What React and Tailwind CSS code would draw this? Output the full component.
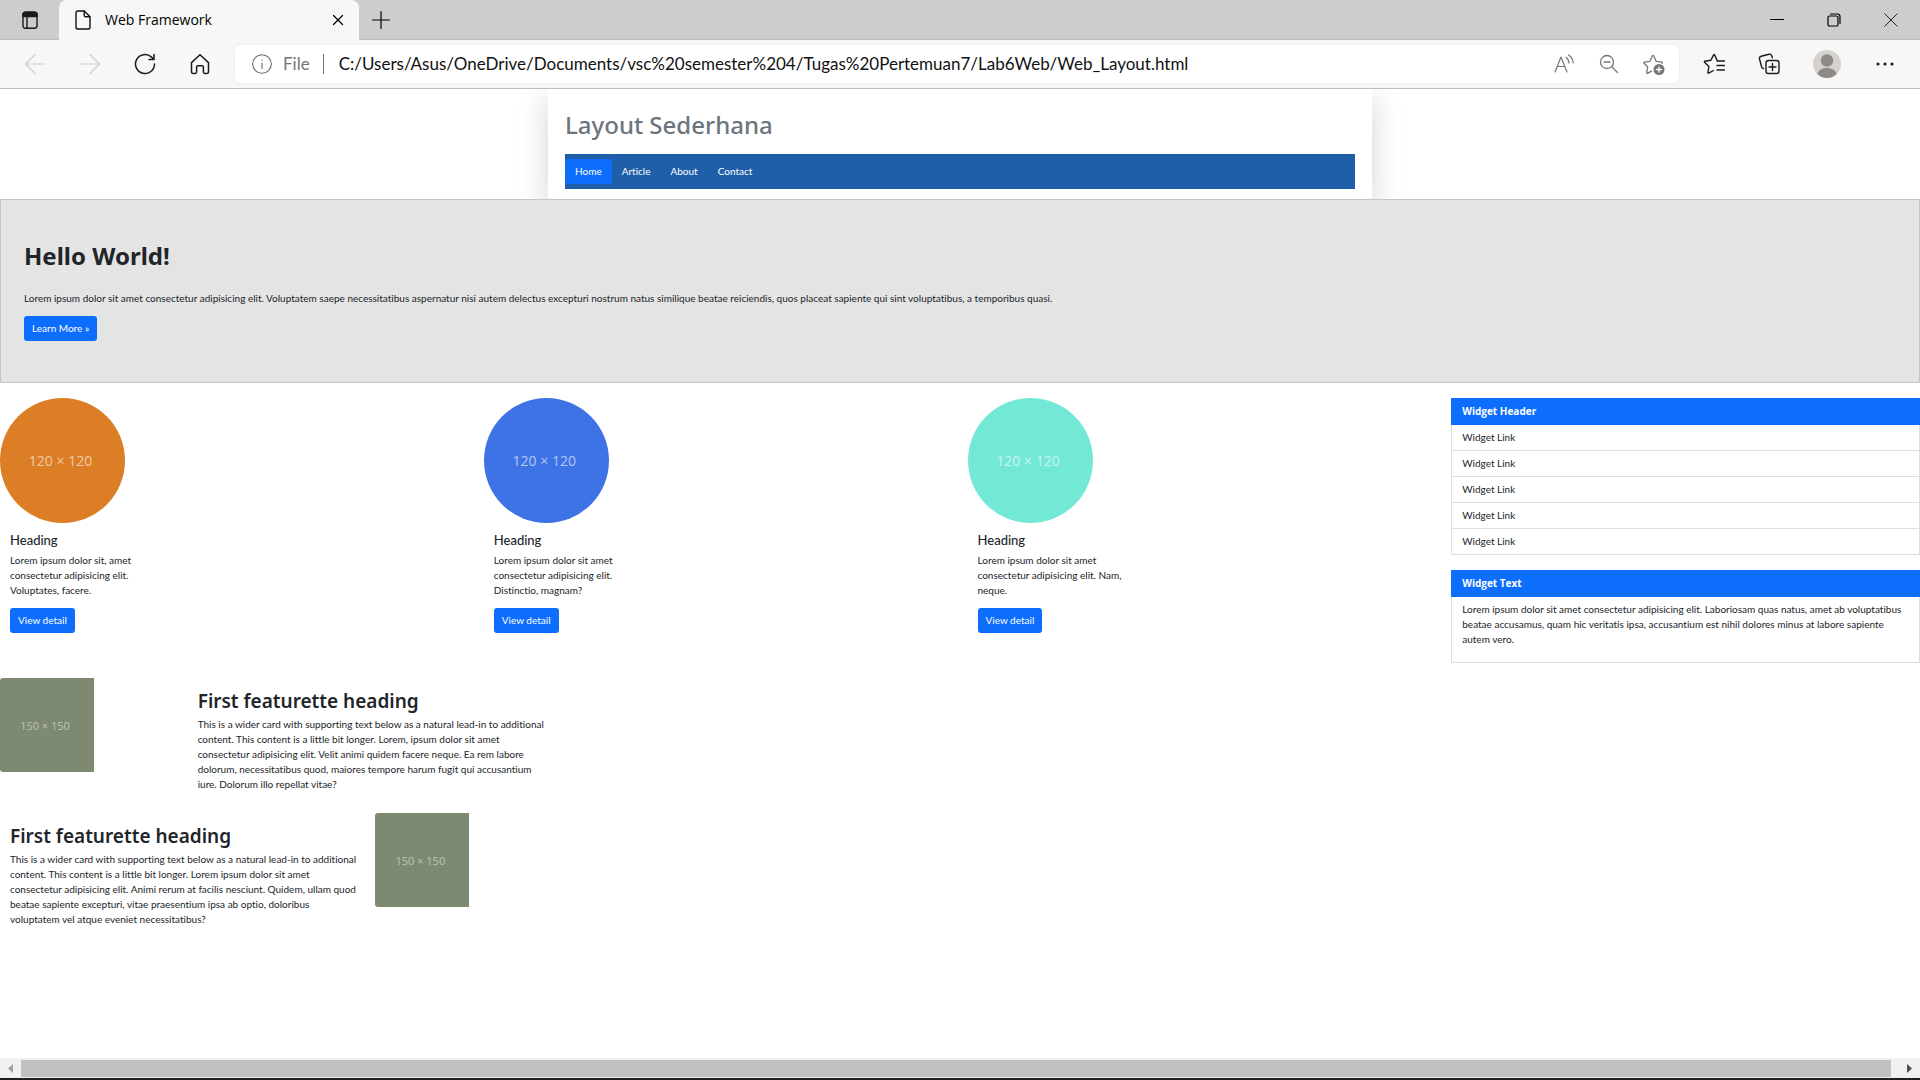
import React from "react";

function Icon({ size = 20, children, className = "", sw = 1.2 }) {
  return (
    <svg
      width={size}
      height={size}
      viewBox={`0 0 ${size} ${size}`}
      fill="none"
      stroke="currentColor"
      strokeWidth={sw}
      strokeLinecap="round"
      strokeLinejoin="round"
      className={`shrink-0 ${className}`}
      aria-hidden="true"
    >
      {children}
    </svg>
  );
}

function TabBar() {
  return (
    <div className="flex h-10 items-stretch bg-[#cdcdcd] shadow-[inset_0_-1px_0_#bcbcbc]">
      <button aria-label="Tab actions" className="flex w-[59px] items-center justify-center text-[#1a1a1a]">
        <Icon sw={1.4}>
          <rect x="3" y="2.2" width="14" height="16" rx="2.4" />
          <path d="M3 4.6C3 3.2 3.8 2.2 5.4 2.2h9.2c1.6 0 2.4 1 2.4 2.4v2H3z" fill="currentColor" />
          <path d="M7 7v11" />
        </Icon>
      </button>
      <div className="flex w-[300px] items-center rounded-t-lg bg-[#f7f7f7] pr-[11px] pl-[14px]">
        <Icon size={20} sw={1.4} className="text-[#111]">
          <path d="M4.8 1h6.4L17 6.8v10.4c0 1-.8 1.8-1.8 1.8H4.8C3.8 19 3 18.2 3 17.2V2.8C3 1.8 3.8 1 4.8 1z" />
          <path d="M11.2 1v4.2c0 1 .6 1.6 1.6 1.6H17" />
        </Icon>
        <span className="ml-3 flex-1 font-['Open_Sans',sans-serif] text-[14px] leading-5 text-black">Web Framework</span>
        <button aria-label="Close tab" className="flex size-5 items-center justify-center text-black">
          <Icon size={12} sw={1.3}>
            <path d="M1.5 1.5l9 9M10.5 1.5l-9 9" />
          </Icon>
        </button>
      </div>
      <button aria-label="New tab" className="flex w-11 items-center justify-center text-black">
        <Icon size={20}>
          <path d="M10 1.5v17M1.5 10h17" />
        </Icon>
      </button>
      <div className="flex-1" />
      <button aria-label="Minimize" className="flex w-[57px] items-center justify-center text-black">
        <Icon size={14} sw={1}>
          <path d="M.5 6.5h13" />
        </Icon>
      </button>
      <button aria-label="Restore" className="flex w-[57px] items-center justify-center text-black">
        <Icon size={14} sw={1.2}>
          <rect x="1" y="3" width="10" height="10" rx="1.6" />
          <path d="M3.5 1h6.8c1.6 0 2.7 1.1 2.7 2.7v6.8" />
        </Icon>
      </button>
      <button aria-label="Close window" className="flex w-[58px] items-center justify-center text-[#222]">
        <Icon size={14} sw={1}>
          <path d="M.8.8l12.4 12.4M13.2.8L.8 13.2" />
        </Icon>
      </button>
    </div>
  );
}

function ToolButton({ label, className = "w-[55px]", children }) {
  return (
    <button aria-label={label} className={`flex h-10 items-center justify-center text-[#1b1b1b] ${className}`}>
      {children}
    </button>
  );
}

function Toolbar() {
  return (
    <div className="flex h-[49px] items-center border-b border-[#bdbdbd] bg-[#f7f7f7] pl-[7px]">
      <ToolButton label="Back">
        <Icon size={22} className="text-[#cfcfcf]">
          <path d="M21 11H1.5M11 1.5L1.5 11l9.5 9.5" />
        </Icon>
      </ToolButton>
      <ToolButton label="Forward">
        <Icon size={22} className="text-[#cfcfcf]">
          <path d="M1 11h19.5M11 1.5l9.5 9.5-9.5 9.5" />
        </Icon>
      </ToolButton>
      <ToolButton label="Refresh">
        <Icon size={22} sw={1.5}>
          <path d="M20.5 11a9.5 9.5 0 1 1-3.2-7.1L19.5 6" />
          <path d="M20 1.5v5h-5" />
        </Icon>
      </ToolButton>
      <ToolButton label="Home">
        <Icon size={22} sw={1.5}>
          <path d="M2.5 9.6L11 1.8l8.5 7.8v9.4c0 .9-.5 1.4-1.4 1.4h-2.3c-.9 0-1.4-.5-1.4-1.4v-4.7c0-1-.6-1.6-1.6-1.6H9.2c-1 0-1.600.6-1.600 1.600V19c0 .9-.5 1.400-1.400 1.400H3.900c-.9 0-1.400-.5-1.400-1.400z" />
        </Icon>
      </ToolButton>
      <div className="ml-2 flex h-[38px] flex-1 items-center rounded-md bg-white pr-[3px] pl-[17px] shadow-[0_0_4px_rgba(0,0,0,0.06)]">
        <Icon size={20} sw={1.1} className="text-[#6b6b6b]">
          <circle cx="10" cy="10" r="9.3" />
          <path d="M10 9v5.5M10 5.8v.4" />
        </Icon>
        <span className="ml-[11px] text-[17px] text-[#767676]">File</span>
        <span className="mr-[15px] ml-[13px] h-5 w-px bg-[#767676]" />
        <input
          aria-label="Address"
          className="min-w-0 flex-1 bg-transparent text-[17px] text-[#111] outline-none"
          defaultValue="C:/Users/Asus/OneDrive/Documents/vsc%20semester%204/Tugas%20Pertemuan7/Lab6Web/Web_Layout.html"
        />
        <div className="flex items-center text-[#767676]">
          <button aria-label="Read aloud" className="flex w-[45px] justify-center">
            <Icon size={20}>
              <path d="M1 18L7 3l6 15M3.3 12.5h7.4" />
              <path d="M12 3.5c1.8 1.2 2.8 3 2.9 5.5M14.5 1c2.8 1.7 4.5 4.4 4.7 8" />
            </Icon>
          </button>
          <button aria-label="Zoom out" className="flex w-[45px] justify-center">
            <Icon size={20} sw={1.3}>
              <circle cx="8" cy="8" r="6.5" />
              <path d="M12.8 12.8l5.7 5.7M5 8h6" />
            </Icon>
          </button>
          <button aria-label="Add to favorites" className="flex w-[45px] justify-center">
            <Icon size={24} sw={1.3}>
              <path d="M9.5 19.2l-4 2.1c-.5.2-.9-.1-.8-.6l1-5.7L2 11.200c-.4-.4-.2-1 .3-1.100l5.600-.8 2.500-5.500c.3-.5.9-.5 1.200 0l2.600 5.500 5.600.8c.6.100.8.700.4 1.100" />
              <circle cx="17" cy="17.5" r="5.5" fill="currentColor" stroke="none" />
              <path d="M17 14.8v5.4M14.3 17.5h5.4" stroke="#fff" />
            </Icon>
          </button>
        </div>
      </div>
      <div className="flex items-center pr-2 pl-[7px]">
        <ToolButton label="Favorites">
          <Icon size={22} sw={1.4}>
            <path d="M10.5 17.5l-4.8 2.6c-.5.2-.9-.1-.8-.6l1-6-4.3-4.2c-.4-.4-.2-1 .3-1.100l6-.9 2.700-5.400c.2-.5.9-.5 1.100 0L14 7.300" />
            <path d="M14 8h7.500M14 12.500h7.500M14 17h7.500" />
          </Icon>
        </ToolButton>
        <ToolButton label="Collections">
          <Icon size={22} sw={1.4}>
            <rect x="8" y="7.5" width="13" height="13" rx="2.6" />
            <path d="M14.5 10.5v7M11 14h7" />
            <path d="M5.5 15.5c-1-.2-1.600-.8-1.900-1.800L1.500 6c-.3-1.200.4-2.400 1.600-2.700L11 1.200c1.200-.3 2.300.4 2.700 1.600l.6 2" />
          </Icon>
        </ToolButton>
        <ToolButton label="Profile" className="w-[61px]">
          <svg width="28" height="28" viewBox="0 0 28 28" aria-hidden="true">
            <circle cx="14" cy="14" r="14" fill="#d5d2ce" />
            <circle cx="14" cy="10.5" r="6.2" fill="#8e8985" />
            <path d="M4.5 24c.8-4 4.8-6 9.5-6s8.7 2 9.500 6A13.900 13.900 0 0 1 14 28a13.900 13.900 0 0 1-9.500-4z" fill="#8e8985" />
          </svg>
        </ToolButton>
        <ToolButton label="Settings and more">
          <svg width="18" height="4" viewBox="0 0 18 4" fill="currentColor" aria-hidden="true">
            <circle cx="2" cy="2" r="1.6" />
            <circle cx="9" cy="2" r="1.6" />
            <circle cx="16" cy="2" r="1.6" />
          </svg>
        </ToolButton>
      </div>
    </div>
  );
}

function LinkButton({ children }) {
  return (
    <a href="#" className="inline-block rounded-[3px] bg-[#0d6efd] px-2 py-[5px] text-[10px] leading-[15px] text-white">
      {children}
    </a>
  );
}

function Header() {
  return (
    <header className="mx-auto max-w-[824px] bg-white px-[17px] pt-5 pb-[10px] shadow-[0_10px_30px_rgba(0,0,0,0.175)]">
      <h1 className="mb-[13px] font-['Noto_Sans',sans-serif] text-[24px] leading-8 font-medium text-[#6c757d]">
        Layout Sederhana
      </h1>
      <nav className="flex bg-[#1f5faa] py-[5px] text-[10px] leading-[25px] text-white">
        <a href="#" className="rounded-[3px] bg-[#0d6efd] px-[10px]">Home</a>
        <a href="#" className="px-[10px]">Article</a>
        <a href="#" className="px-[10px]">About</a>
        <a href="#" className="px-[10px]">Contact</a>
      </nav>
    </header>
  );
}

function Hero() {
  return (
    <section className="border border-[#c6c6c6] bg-[#e4e4e4] px-[23px] pt-10 pb-[41px]">
      <h1 className="mb-[19px] font-['Noto_Sans',sans-serif] text-[24px] leading-8 font-bold">Hello World!</h1>
      <p className="mb-[10px]">
        Lorem ipsum dolor sit amet consectetur adipisicing elit. Voluptatem saepe necessitatibus aspernatur nisi autem
        delectus excepturi nostrum natus similique beatae reiciendis, quos placeat sapiente qui sint voluptatibus, a
        temporibus quasi.
      </p>
      <div className="flex">
        <LinkButton>Learn More »</LinkButton>
      </div>
    </section>
  );
}

function Lines({ lines }) {
  return (
    <p>
      {lines.map((l) => (
        <span key={l} className="block">{l}</span>
      ))}
    </p>
  );
}

function CircleCard({ color, lines }) {
  return (
    <article>
      <div className={`flex size-[125px] items-center justify-center rounded-full pr-1 font-['Open_Sans',sans-serif] text-[14px] text-white/60 ${color}`}>
        120 × 120
      </div>
      <div className="p-[10px]">
        <h5 className="mb-[5px] text-[13px] leading-[15px] font-medium">Heading</h5>
        <Lines lines={lines} />
        <div className="mt-[10px] flex">
          <LinkButton>View detail</LinkButton>
        </div>
      </div>
    </article>
  );
}

function Placeholder150() {
  return (
    <div className="flex size-[94px] items-center justify-center rounded-l-[3px] bg-[#7d8970] pr-1 font-['Open_Sans',sans-serif] text-[11px] text-white/50">
      150 × 150
    </div>
  );
}

function FeatureText({ lines }) {
  return (
    <div className="px-[10px] pt-[11px] pb-[10px]">
      <h2 className="mb-1 font-['Noto_Sans',sans-serif] text-[19px] leading-6 font-semibold">
        First featurette heading
      </h2>
      <Lines lines={lines} />
    </div>
  );
}

function WidgetTitle({ children }) {
  return (
    <h3 className="bg-[#0d6efd] px-[11px] py-[6px] font-['Open_Sans',sans-serif] leading-[15px] font-bold text-white">
      {children}
    </h3>
  );
}

function Sidebar() {
  return (
    <aside className="flex flex-col gap-[15px]">
      <section>
        <WidgetTitle>Widget Header</WidgetTitle>
        <ul>
          {[1, 2, 3, 4, 5].map((n) => (
            <li key={n} className="border border-t-0 border-[#dedede]">
              <a href="#" className="block px-[10px] py-[5px]">Widget Link</a>
            </li>
          ))}
        </ul>
      </section>
      <section>
        <WidgetTitle>Widget Text</WidgetTitle>
        <div className="border border-t-0 border-[#dedede] px-[10px] pt-[5px] pb-[15px]">
          <Lines
            lines={[
              "Lorem ipsum dolor sit amet consectetur adipisicing elit. Laboriosam quas natus, amet ab voluptatibus",
              "beatae accusamus, quam hic veritatis ipsa, accusantium est nihil dolores minus at labore sapiente",
              "autem vero.",
            ]}
          />
        </div>
      </section>
    </aside>
  );
}

function ScrollBar() {
  return (
    <div className="flex h-[22px] items-center border-b-2 border-[#1f1d20] bg-[#f0f0f0]">
      <button aria-label="Scroll left" className="flex w-[21px] justify-center text-[#a0a0a0]">
        <svg width="5" height="9" viewBox="0 0 5 9" fill="currentColor" aria-hidden="true"><path d="M5 0v9L0 4.5z" /></svg>
      </button>
      <div className="h-[17px] flex-1 bg-[#c1c1c1]" />
      <button aria-label="Scroll right" className="flex w-[29px] justify-center pl-2 text-[#505050]">
        <svg width="5" height="9" viewBox="0 0 5 9" fill="currentColor" aria-hidden="true"><path d="M0 0v9l5-4.5z" /></svg>
      </button>
    </div>
  );
}

export default function App() {
  return (
    <div className="flex min-h-screen flex-col bg-white font-['Lato','Open_Sans',sans-serif] [font-variant-ligatures:none]">
      <TabBar />
      <Toolbar />
      <main className="flex-1 overflow-hidden text-[10px] leading-[15px] text-[#212529]">
        <Header />
        <Hero />
        <div className="mt-[15px] grid grid-cols-4 gap-[15px]">
          <CircleCard
            color="bg-[#db7e26]"
            lines={["Lorem ipsum dolor sit, amet", "consectetur adipisicing elit.", "Voluptates, facere."]}
          />
          <CircleCard
            color="bg-[#3e73e5]"
            lines={["Lorem ipsum dolor sit amet", "consectetur adipisicing elit.", "Distinctio, magnam?"]}
          />
          <CircleCard
            color="bg-[#72e8d5]"
            lines={["Lorem ipsum dolor sit amet", "consectetur adipisicing elit. Nam,", "neque."]}
          />
          <Sidebar />
        </div>
        <div className="mt-[15px] flex max-w-[563px]">
          <div className="w-1/3">
            <Placeholder150 />
          </div>
          <FeatureText
            lines={[
              "This is a wider card with supporting text below as a natural lead-in to additional",
              "content. This content is a little bit longer. Lorem, ipsum dolor sit amet",
              "consectetur adipisicing elit. Velit animi quidem facere neque. Ea rem labore",
              "dolorum, necessitatibus quod, maiores tempore harum fugit qui accusantium",
              "iure. Dolorum illo repellat vitae?",
            ]}
          />
        </div>
        <div className="mt-[11px] flex max-w-[563px]">
          <div className="w-2/3">
            <FeatureText
              lines={[
                "This is a wider card with supporting text below as a natural lead-in to additional",
                "content. This content is a little bit longer. Lorem ipsum dolor sit amet",
                "consectetur adipisicing elit. Animi rerum at facilis nesciunt. Quidem, ullam quod",
                "beatae sapiente excepturi, vitae praesentium ipsa ab optio, doloribus",
                "voluptatem vel atque eveniet necessitatibus?",
              ]}
            />
          </div>
          <Placeholder150 />
        </div>
      </main>
      <ScrollBar />
    </div>
  );
}
